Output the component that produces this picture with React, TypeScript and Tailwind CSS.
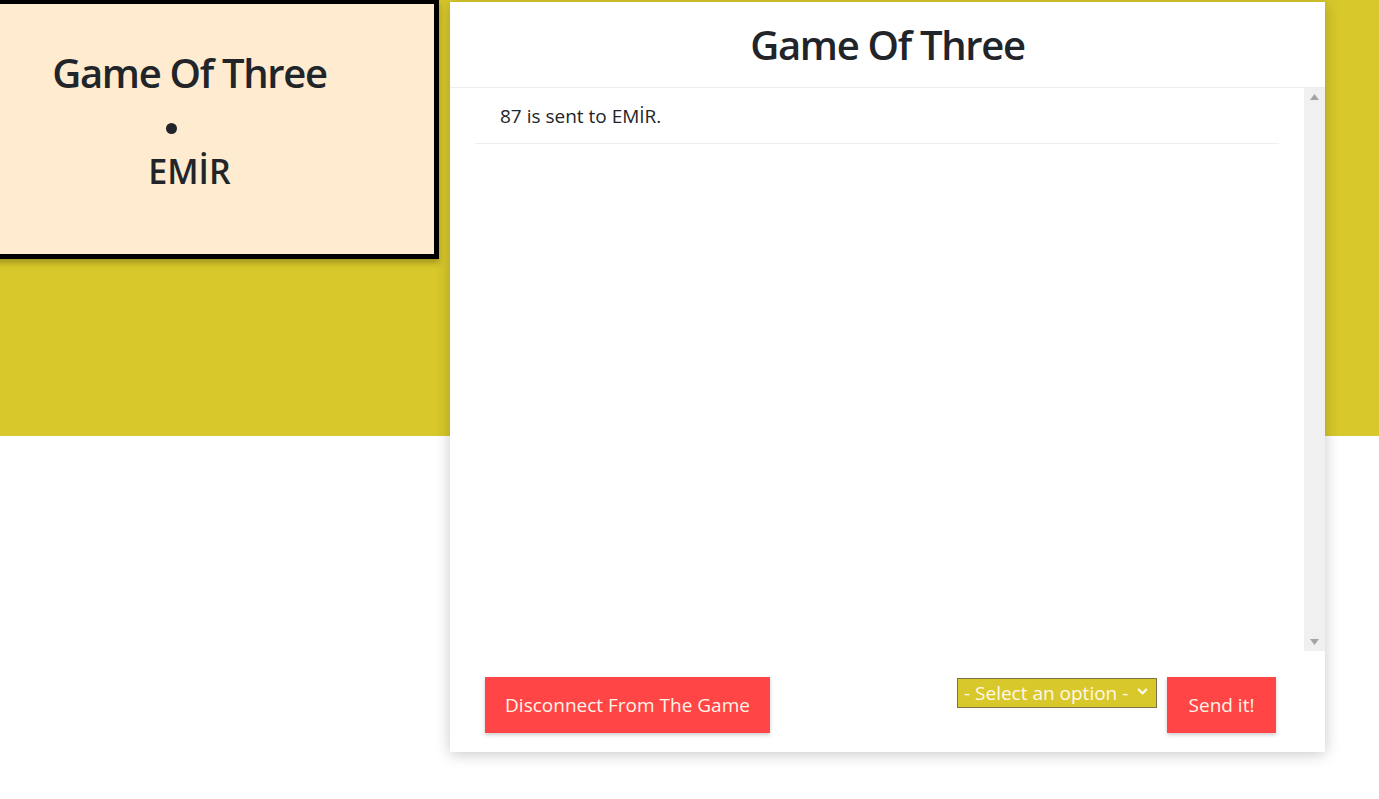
import { ChevronDown } from 'lucide-react';

const FONT = "font-['Open_Sans','Noto_Sans',sans-serif]";

export default function App() {
  return (
    <div className={`relative min-h-[799px] w-full overflow-hidden bg-white text-[#212529] ${FONT}`}>
      <div className="h-[436px] w-full bg-[#d8c82b]" />
      <div className="absolute left-0 top-0 flex w-full items-start">
        <div className="-ml-[60px] -mt-[1px] flex h-[260px] w-[499px] flex-col items-center border-[5px] border-black bg-[#ffebcf] pt-[45px] shadow-[0_4px_6px_rgba(0,0,0,0.25)]">
          <h1 className="text-[40px] font-semibold leading-[48px] tracking-[-1.3px]">Game Of Three</h1>
          <span className="-ml-[36px] mt-[26px] h-[11px] w-[11px] rounded-full bg-[#212529]" />
          <h2 className="mt-[17px] text-[34px] font-semibold leading-[40px]">EMİR</h2>
        </div>

        <div className="ml-[11px] mt-[2px] flex h-[750px] w-[875px] flex-col bg-white shadow-[0_2px_14px_rgba(0,0,0,0.22)]">
          <div className="flex h-[86px] items-center justify-center border-b border-[#ececec]">
            <h1 className="text-[40px] font-semibold leading-none tracking-[-1.3px]">Game Of Three</h1>
          </div>
          <div className="flex h-[563px]">
            <ul className="flex-1 px-[25px]">
              <li className="flex h-[56px] items-center border-b border-[#eeeeee] pl-[25px] pt-[2px] text-[19px]">87 is sent to EMİR.</li>
            </ul>
            <div className="flex w-[21px] flex-col items-center justify-between bg-[#f0f0f0] py-[6px]">
              <svg width="9" height="6" viewBox="0 0 9 6"><path d="M4.5 0L9 6H0z" fill="#a3a3a3" /></svg>
              <svg width="9" height="6" viewBox="0 0 9 6"><path d="M0 0h9L4.5 6z" fill="#a3a3a3" /></svg>
            </div>
          </div>
          <div className="flex flex-1 items-start justify-between pl-[35px] pr-[49px] pt-[26px]">
            <button className="h-[56px] w-[285px] bg-[#ff4545] text-[19px] text-[#fff4e8] shadow-[0_2px_4px_rgba(0,0,0,0.2)]">Disconnect From The Game</button>
            <div className="flex items-start gap-[10px]">
              <div className="relative mt-[1px]">
                <select className="h-[30px] w-[200px] appearance-none border border-[#7b7248] bg-[#d8c82b] pl-[6px] text-[19px] leading-[28px] text-[#fff8e8] outline-none">
                  <option>- Select an option -</option>
                </select>
                <ChevronDown className="pointer-events-none absolute right-[7px] top-[6px] h-[15px] w-[15px] text-[#fff8e8]" strokeWidth={3.5} />
              </div>
              <button className="h-[56px] w-[109px] bg-[#ff4545] text-[19px] text-[#fff4e8] shadow-[0_2px_4px_rgba(0,0,0,0.2)]">Send it!</button>
            </div>
          </div>
        </div>
      </div>
    </div>
  );
}
